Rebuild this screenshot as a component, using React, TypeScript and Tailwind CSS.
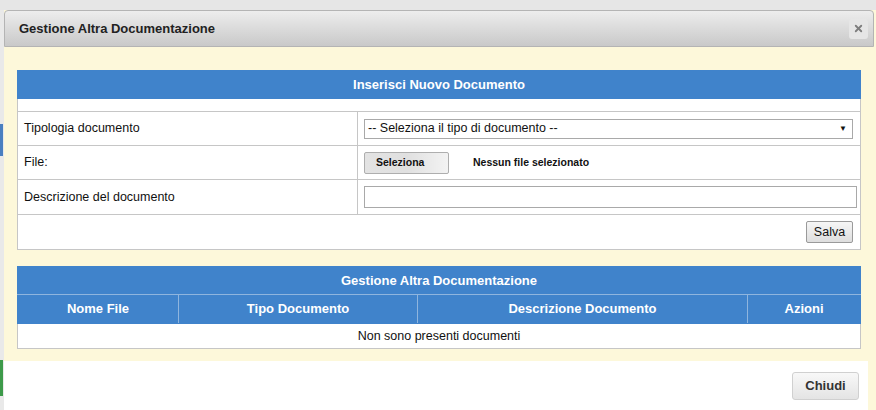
import { X } from "lucide-react";

const cell = "border border-[#c6c6c6]";

export default function App() {
    return (
        <div className="w-[876px] h-[410px] overflow-hidden bg-[#fdf8da] font-['Liberation_Sans',Arial,sans-serif] text-[12.5px] text-[#111]">
            <div className="h-[10px] bg-[#e6e6e6]" />
            <div className="flex">
                {/* page behind the dialog */}
                <div className="w-[4px] h-[400px] bg-[#e9e9e9] flex flex-col">
                    <div className="h-[114px]" />
                    <div className="h-[32px] w-[3px] bg-[#4a7fc0]" />
                    <div className="h-[204px]" />
                    <div className="h-[36px] w-[3px] bg-[#3d9a4a]" />
                </div>

                <div className="w-[870px] flex flex-col">
                    <div className="h-[37px] flex items-center justify-between pl-[14px] pr-[5px] rounded-t-[4px] border border-[#b4b4b4] bg-gradient-to-b from-[#ededed] to-[#c9c9c9]">
                        <span className="font-bold text-[13px] text-[#222]">Gestione Altra Documentazione</span>
                        <button className="w-[19px] h-[20px] flex items-center justify-center rounded-[3px] bg-[#e6e6e6]">
                            <X size={11} strokeWidth={4} className="text-[#7e7e7e]" />
                        </button>
                    </div>

                    <div className="bg-[#fdf8da] pl-[13px] pr-[13px] pt-[23px] pb-[12px] flex flex-col gap-[16px]">
                        <table className="w-[844px] table-fixed border-collapse bg-white">
                            <colgroup>
                                <col className="w-[340px]" />
                                <col />
                            </colgroup>
                            <tbody>
                                <tr>
                                    <td colSpan={2} className="h-[28px] bg-[#4083cb] border border-[#4083cb] text-center font-bold text-[13px] text-white">
                                        Inserisci Nuovo Documento
                                    </td>
                                </tr>
                                <tr>
                                    <td colSpan={2} className={`${cell} h-[13px]`} />
                                </tr>
                                <tr>
                                    <td className={`${cell} h-[34px] pl-[6px]`}>Tipologia documento</td>
                                    <td className={`${cell} px-[6px]`}>
                                        <div className="h-[20px] w-[489px] border border-[#a9a9a9] flex items-center justify-between pl-[3px] pr-[5px]">
                                            <span>-- Seleziona il tipo di documento --</span>
                                            <span className="text-[8px]">▼</span>
                                        </div>
                                    </td>
                                </tr>
                                <tr>
                                    <td className={`${cell} h-[34px] pl-[6px]`}>File:</td>
                                    <td className={`${cell} px-[6px]`}>
                                        <div className="flex items-center gap-[24px]">
                                            <div className="w-[85px] h-[22px] flex items-center pl-[11px] border border-[#aeaeae] rounded-[2px] bg-gradient-to-r from-[#e3e3e3] via-[#e0e0e0] to-[#f3f3f3] text-[10.5px] font-bold">
                                                Seleziona
                                            </div>
                                            <span className="text-[10.5px] font-bold">Nessun file selezionato</span>
                                        </div>
                                    </td>
                                </tr>
                                <tr>
                                    <td className={`${cell} h-[35px] pl-[6px]`}>Descrizione del documento</td>
                                    <td className={`${cell} px-[6px]`}>
                                        <div className="h-[22px] w-[493px] border border-[#a9a9a9] bg-white" />
                                    </td>
                                </tr>
                                <tr>
                                    <td colSpan={2} className={`${cell} h-[35px] pr-[7px]`}>
                                        <div className="flex justify-end">
                                            <div className="h-[22px] w-[47px] flex items-center justify-center border border-[#9a9a9a] rounded-[2px] bg-gradient-to-b from-[#f6f6f6] to-[#dedede]">
                                                Salva
                                            </div>
                                        </div>
                                    </td>
                                </tr>
                            </tbody>
                        </table>

                        <table className="w-[844px] table-fixed border-collapse bg-white">
                            <colgroup>
                                <col className="w-[161px]" />
                                <col className="w-[239px]" />
                                <col className="w-[330px]" />
                                <col />
                            </colgroup>
                            <tbody>
                                <tr>
                                    <td colSpan={4} className="h-[28px] bg-[#4083cb] border border-[#4083cb] border-b-[#8fb5de] text-center font-bold text-[13px] text-white">
                                        Gestione Altra Documentazione
                                    </td>
                                </tr>
                                <tr className="text-white font-bold text-[13px] text-center bg-[#4083cb]">
                                    <td className="h-[29px] border border-[#4083cb] border-r-[#8fb5de] border-t-[#8fb5de]">Nome File</td>
                                    <td className="border border-[#4083cb] border-r-[#8fb5de] border-t-[#8fb5de]">Tipo Documento</td>
                                    <td className="border border-[#4083cb] border-r-[#8fb5de] border-t-[#8fb5de]">Descrizione Documento</td>
                                    <td className="border border-[#4083cb] border-t-[#8fb5de]">Azioni</td>
                                </tr>
                                <tr>
                                    <td colSpan={4} className={`${cell} h-[25px] text-center`}>Non sono presenti documenti</td>
                                </tr>
                            </tbody>
                        </table>
                    </div>

                    <div className="h-[49px] w-[864px] bg-white flex justify-end items-start pt-[11px] pr-[9px]">
                        <button className="w-[67px] h-[28px] rounded-[3px] border border-[#d0d0d0] bg-gradient-to-b from-[#f8f8f8] to-[#e4e4e4] font-bold text-[13px] text-[#333]">
                            Chiudi
                        </button>
                    </div>
                </div>
            </div>
        </div>
    );
}
